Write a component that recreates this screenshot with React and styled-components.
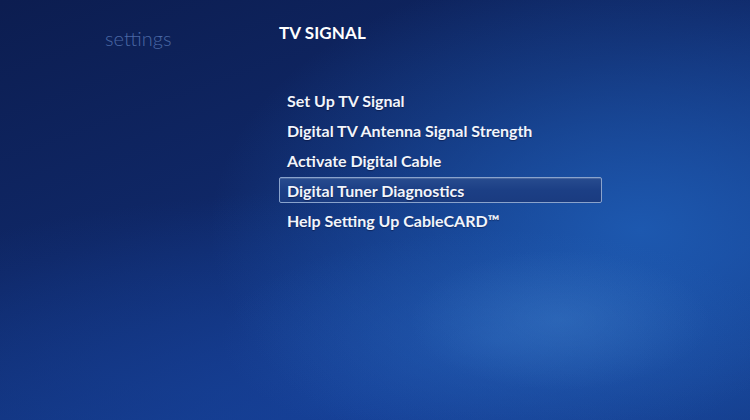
import React from "react";
import styled, { createGlobalStyle } from "styled-components";

const Global = createGlobalStyle`
  html, body { margin: 0; padding: 0; background: #0d1f52; }
  * { box-sizing: border-box; }
`;

const Screen = styled.div`
  width: 750px;
  height: 420px;
  overflow: hidden;
  display: flex;
  font-family: Lato, "Open Sans", sans-serif;
  background:
    radial-gradient(ellipse 150px 70px at 560px 320px, rgba(75, 140, 210, 0.28), rgba(75, 140, 210, 0) 100%),
    radial-gradient(ellipse 280px 110px at 500px 340px, rgba(50, 115, 200, 0.3), rgba(50, 115, 200, 0) 100%),
    radial-gradient(ellipse 430px 270px at 640px 230px, rgba(30, 92, 180, 0.9), rgba(30, 92, 180, 0) 100%),
    radial-gradient(ellipse 620px 220px at 360px 410px, rgba(22, 66, 155, 0.75), rgba(22, 66, 155, 0) 100%),
    linear-gradient(160deg, #0c1d50 0%, #0f2766 40%, #143a8a 75%, #12347e 100%);
`;

const Side = styled.div`
  width: 279px;
  padding: 26px 0 0 105px;
  flex-shrink: 0;
`;

const SideLabel = styled.div`
  font-weight: 300;
  font-size: 20px;
  line-height: 24px;
  color: #4a67a4;
`;

const Main = styled.div`
  display: flex;
  flex-direction: column;
  padding-top: 22px;
  width: 323px;
`;

const Title = styled.h1`
  margin: 0;
  font-weight: 700;
  font-size: 17px;
  line-height: 22px;
  color: #ffffff;
  letter-spacing: 0.1px;
`;

const Menu = styled.ul`
  list-style: none;
  margin: 43px 0 0;
  padding: 0;
  display: flex;
  flex-direction: column;
  gap: 4px;
`;

const Item = styled.li`
  height: 26px;
  display: flex;
  align-items: center;
  padding: 0 0 0 7px;
  font-weight: 700;
  font-size: 16px;
  color: #f2f5fb;
  border-radius: 2px;
  border: 1.5px solid ${(p) => (p.$active ? "#8aa3cc" : "transparent")};
  background: ${(p) =>
    p.$active
      ? "linear-gradient(180deg, #284c8f 0%, #1c3f85 50%, #1a3b80 100%)"
      : "transparent"};
  box-shadow: ${(p) => (p.$active ? "inset 0 1px 0 rgba(255,255,255,0.15)" : "none")};
  text-shadow: 0 1px 1px rgba(0, 0, 30, 0.4);
`;

const items = [
  "Set Up TV Signal",
  "Digital TV Antenna Signal Strength",
  "Activate Digital Cable",
  "Digital Tuner Diagnostics",
  "Help Setting Up CableCARD™",
];

export default function App() {
  return (
    <>
      <Global />
      <Screen>
        <Side>
          <SideLabel>settings</SideLabel>
        </Side>
        <Main>
          <Title>TV SIGNAL</Title>
          <Menu>
            {items.map((t, i) => (
              <Item key={t} $active={i === 3}>
                {t}
              </Item>
            ))}
          </Menu>
        </Main>
      </Screen>
    </>
  );
}
